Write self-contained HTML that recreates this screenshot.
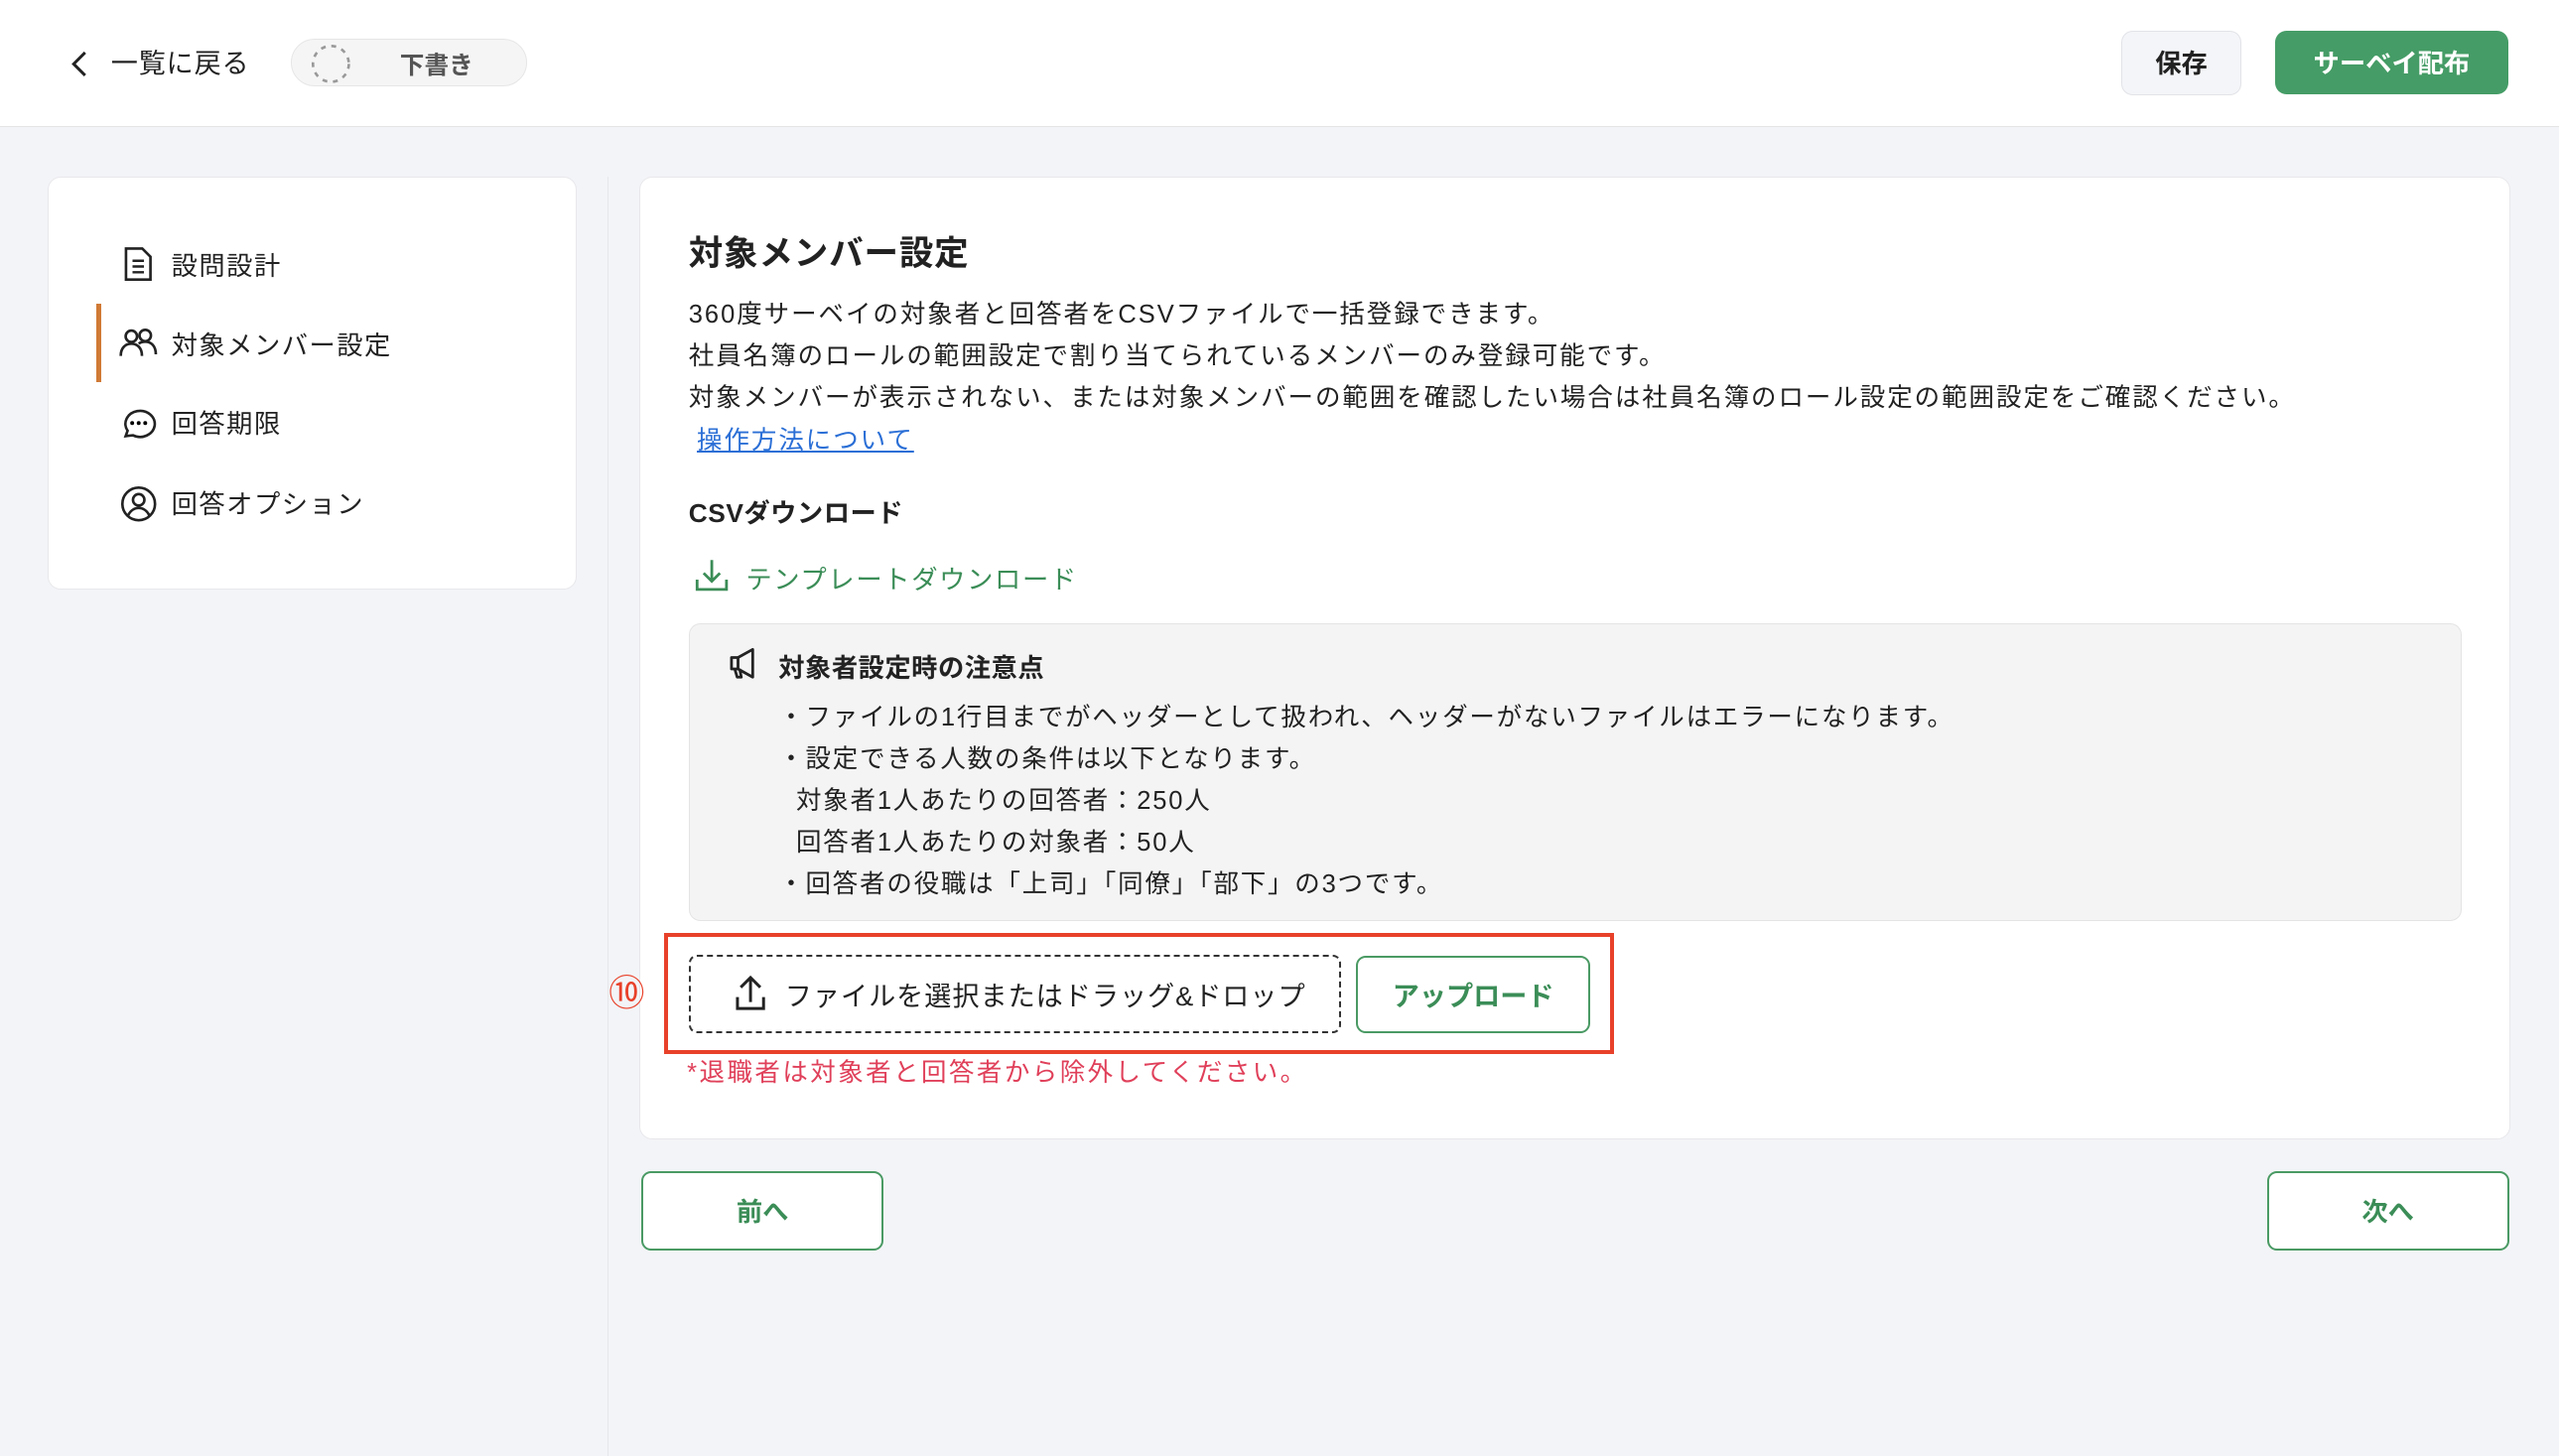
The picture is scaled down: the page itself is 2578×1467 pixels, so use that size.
<!DOCTYPE html>
<html><head><meta charset="utf-8">
<style>
html,body{margin:0;padding:0;width:2578px;height:1466px;overflow:hidden;background:#f3f4f7}
#w{position:absolute;left:0;top:0;width:1568px;height:892px;zoom:1.6441;font-family:"Liberation Sans","Noto Sans CJK JP",sans-serif;color:#222;background:#f3f4f7}
.a{position:absolute;white-space:nowrap}
.hdr{left:0;top:0;width:1568px;height:77px;background:#fff;border-bottom:1px solid #e4e4e6}
.card{background:#fff;border:1px solid #e8e8ec;border-radius:8px}
.t{font-size:16px;line-height:20px;letter-spacing:0.9px}
.p{font-size:15.5px;line-height:25.6px;color:#222;letter-spacing:1.2px}
svg{position:absolute}
</style></head><body><div id="w">
<div class="a hdr"></div>
<svg style="left:40px;top:29px" width="18" height="20" viewBox="0 0 18 20"><path d="M12 3 L5 10 L12 17" fill="none" stroke="#222" stroke-width="1.8"/></svg>
<div class="a t" style="left:68px;top:29px;font-size:16.5px;letter-spacing:0.5px">一覧に戻る</div>
<div class="a" style="left:178px;top:24px;width:144px;height:28px;border:1px solid #e6e6e6;border-radius:15px;background:#f5f5f5"></div>
<svg style="left:190px;top:26px" width="26" height="26" viewBox="0 0 26 26"><circle cx="13" cy="13" r="11" fill="none" stroke="#999" stroke-width="1.6" stroke-dasharray="3 3.5"/></svg>
<div class="a" style="left:245px;top:28px;font-size:15px;color:#555;font-weight:bold">下書き</div>
<div class="a" style="left:1300px;top:19px;width:72px;height:38px;border:1px solid #e2e3e8;border-radius:7px;background:#f4f5f8;font-size:16px;font-weight:bold;text-align:center;line-height:40px">保存</div>
<div class="a" style="left:1394px;top:19px;width:143px;height:39px;border-radius:7px;background:#459c66;color:#fff;font-size:16px;font-weight:bold;text-align:center;line-height:41px">サーベイ配布</div>

<div class="a card" style="left:29px;top:108px;width:323px;height:252px"></div>
<div class="a" style="left:372px;top:108px;width:1px;height:784px;background:#e6e7ea"></div>
<div class="a" style="left:59px;top:186px;width:3px;height:48px;background:#d07a35"></div>
<svg style="left:74px;top:151px" width="22" height="22" viewBox="0 0 22 22"><path d="M3 1.5h10l5 5v14H3z" fill="none" stroke="#222" stroke-width="1.6"/><path d="M7 9h7M7 12.5h7M7 16h7" stroke="#222" stroke-width="1.5"/></svg>
<div class="a t" style="left:105px;top:153px">設問設計</div>
<svg style="left:73px;top:200px" width="24" height="22" viewBox="0 0 24 22"><circle cx="7.5" cy="6" r="3.5" fill="none" stroke="#222" stroke-width="1.6"/><circle cx="16" cy="5.5" r="3.5" fill="none" stroke="#222" stroke-width="1.6"/><path d="M1 18c0-5 3-7.5 6.5-7.5S14 13 14 18M12 10.5c1-.8 2.5-1.2 4-1.2 3.5 0 6.5 2.5 6.5 7.7" fill="none" stroke="#222" stroke-width="1.6"/></svg>
<div class="a t" style="left:105px;top:202px">対象メンバー設定</div>
<svg style="left:73px;top:249px" width="24" height="22" viewBox="0 0 24 22"><path d="M4 18.5l1.2-3.3A9 8 0 1 1 8.5 18z" fill="none" stroke="#222" stroke-width="1.6"/><circle cx="8" cy="10.5" r="1.2"/><circle cx="12" cy="10.5" r="1.2"/><circle cx="16" cy="10.5" r="1.2"/></svg>
<div class="a t" style="left:105px;top:250px">回答期限</div>
<svg style="left:73px;top:297px" width="24" height="24" viewBox="0 0 24 24"><circle cx="12" cy="12" r="10" fill="none" stroke="#222" stroke-width="1.6"/><circle cx="12" cy="9.5" r="3.5" fill="none" stroke="#222" stroke-width="1.6"/><path d="M5.5 19c1.5-3 4-4.5 6.5-4.5s5 1.5 6.5 4.5" fill="none" stroke="#222" stroke-width="1.6"/></svg>
<div class="a t" style="left:105px;top:299px">回答オプション</div>

<div class="a card" style="left:392px;top:108px;width:1145px;height:589px"></div>
<div class="a" style="left:422px;top:138px;font-size:21px;font-weight:bold;letter-spacing:0.5px">対象メンバー設定</div>
<div class="a p" style="left:422px;top:180px">360度サーベイの対象者と回答者をCSVファイルで一括登録できます。<br>社員名簿のロールの範囲設定で割り当てられているメンバーのみ登録可能です。<br>対象メンバーが表示されない、または対象メンバーの範囲を確認したい場合は社員名簿のロール設定の範囲設定をご確認ください。</div>
<div class="a p" style="left:427px;top:257px;color:#2b6fd6;text-decoration:underline">操作方法について</div>
<div class="a" style="left:422px;top:301px;font-size:16px;font-weight:bold;letter-spacing:0.3px">CSVダウンロード</div>
<svg style="left:425px;top:341px" width="22" height="22" viewBox="0 0 22 22"><path d="M11 2v13M6 10l5 5 5-5M2 14v6h18v-6" fill="none" stroke="#3b8d57" stroke-width="1.7"/></svg>
<div class="a" style="left:457px;top:342px;font-size:16px;color:#3b8d57;letter-spacing:1px">テンプレートダウンロード</div>

<div class="a" style="left:422px;top:382px;width:1085px;height:181px;background:#f4f4f4;border:1px solid #e4e4e4;border-radius:7px"></div>
<svg style="left:445px;top:396px" width="22" height="22" viewBox="0 0 22 22"><path d="M3 7h4l9-5v17l-9-5H3z M7 7v7M5 14l1.5 5h2.5l-1-5" fill="none" stroke="#222" stroke-width="1.7" stroke-linejoin="round"/></svg>
<div class="a" style="left:477px;top:396px;font-size:16px;font-weight:bold;letter-spacing:0.3px">対象者設定時の注意点</div>
<div class="a p" style="left:477px;top:427px;letter-spacing:1.1px">・ファイルの1行目までがヘッダーとして扱われ、ヘッダーがないファイルはエラーになります。<br>・設定できる人数の条件は以下となります。<br>&nbsp;&nbsp;対象者1人あたりの回答者：250人<br>&nbsp;&nbsp;回答者1人あたりの対象者：50人<br>・回答者の役職は「上司」「同僚」「部下」の3つです。</div>

<div class="a" style="left:407px;top:572px;width:577px;height:69px;border:3px solid #e8412a"></div>
<div class="a" style="left:373px;top:596px;font-size:22px;color:#e8412a;line-height:26px">⑩</div>
<div class="a" style="left:422px;top:585px;width:397px;height:46px;border:1.5px dashed #333;border-radius:5px"></div>
<svg style="left:449px;top:596px" width="22" height="24" viewBox="0 0 22 24"><path d="M11 18V3M5 9l6-6 6 6M3 15v7h16v-7" fill="none" stroke="#222" stroke-width="1.8"/></svg>
<div class="a" style="left:481px;top:597px;font-size:16.5px;letter-spacing:0.6px">ファイルを選択またはドラッグ&amp;ドロップ</div>
<div class="a" style="left:831px;top:586px;width:141px;height:45px;border:1.5px solid #4a9a64;border-radius:6px;color:#3b8d57;font-size:16.5px;font-weight:bold;text-align:center;line-height:47px">アップロード</div>
<div class="a" style="left:421px;top:645px;font-size:15.5px;color:#e0405a;letter-spacing:1.5px">*退職者は対象者と回答者から除外してください。</div>

<div class="a" style="left:393px;top:718px;width:146px;height:46px;border:1.5px solid #4a9a64;border-radius:6px;background:#fff;color:#3b8d57;font-size:16px;font-weight:bold;text-align:center;line-height:48px">前へ</div>
<div class="a" style="left:1389px;top:718px;width:146px;height:46px;border:1.5px solid #4a9a64;border-radius:6px;background:#fff;color:#3b8d57;font-size:16px;font-weight:bold;text-align:center;line-height:48px">次へ</div>
</div></body></html>
